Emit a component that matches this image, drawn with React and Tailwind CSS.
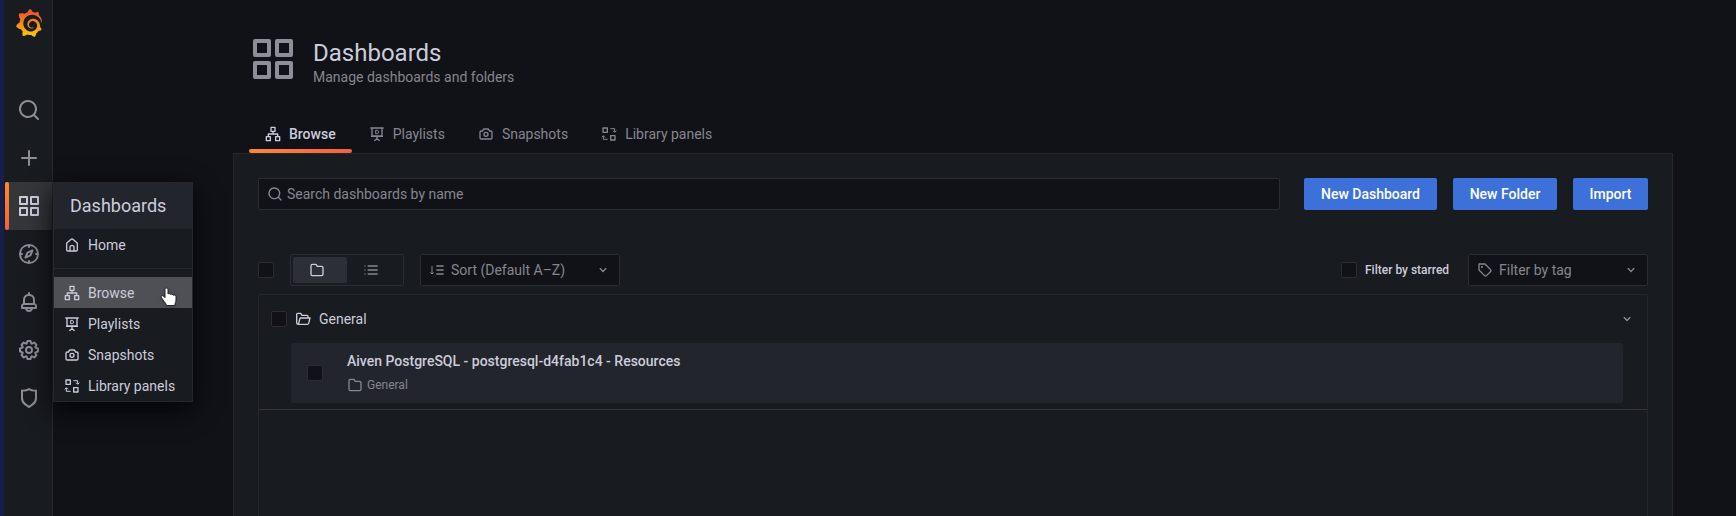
import { SiGrafana } from "react-icons/si";

const PATHS = {
  search:
    "M21.71,20.29,18,16.61A9,9,0,1,0,16.61,18l3.68,3.68a1,1,0,0,0,1.42,0A1,1,0,0,0,21.71,20.29ZM11,18a7,7,0,1,1,7-7A7,7,0,0,1,11,18Z",
  plus: "M19,11H13V5a1,1,0,0,0-2,0v6H5a1,1,0,0,0,0,2h6v6a1,1,0,0,0,2,0V13h6a1,1,0,0,0,0-2Z",
  apps: "M10,13H3a1,1,0,0,0-1,1v7a1,1,0,0,0,1,1h7a1,1,0,0,0,1-1V14A1,1,0,0,0,10,13ZM9,20H4V15H9ZM21,2H14a1,1,0,0,0-1,1v7a1,1,0,0,0,1,1h7a1,1,0,0,0,1-1V3A1,1,0,0,0,21,2ZM20,9H15V4h5Zm1,4H14a1,1,0,0,0-1,1v7a1,1,0,0,0,1,1h7a1,1,0,0,0,1-1V14A1,1,0,0,0,21,13Zm-1,7H15V15h5ZM10,2H3A1,1,0,0,0,2,3v7a1,1,0,0,0,1,1h7a1,1,0,0,0,1-1V3A1,1,0,0,0,10,2ZM9,9H4V4H9Z",
  compass:
    "M12,2A10,10,0,1,0,22,12,10,10,0,0,0,12,2Zm1,17.93V19a1,1,0,0,0-2,0v.93A8,8,0,0,1,4.07,13H5a1,1,0,0,0,0-2H4.07A8,8,0,0,1,11,4.07V5a1,1,0,0,0,2,0V4.07A8,8,0,0,1,19.93,11H19a1,1,0,0,0,0,2h.93A8,8,0,0,1,13,19.93ZM15.14,7.55l-5,2.12a1,1,0,0,0-.52.52l-2.12,5a1,1,0,0,0,.21,1.1,1,1,0,0,0,.7.29.93.93,0,0,0,.4-.09l5-2.12a1,1,0,0,0,.52-.52l2.12-5a1,1,0,0,0-1.31-1.31Zm-2.49,5.1-2.28,1,1-2.28,2.28-1Z",
  bell: "M18,13.18V10a6,6,0,0,0-5-5.91V3a1,1,0,0,0-2,0V4.09A6,6,0,0,0,6,10v3.18A3,3,0,0,0,4,16v2a1,1,0,0,0,1,1H8.14a4,4,0,0,0,7.72,0H19a1,1,0,0,0,1-1V16A3,3,0,0,0,18,13.18ZM8,10a4,4,0,0,1,8,0v3H8Zm4,10a2,2,0,0,1-1.72-1h3.44A2,2,0,0,1,12,20Zm6-3H6V16a1,1,0,0,1,1-1H17a1,1,0,0,1,1,1Z",
  cog: "M21.32,9.55l-1.89-.63.89-1.78A1,1,0,0,0,20.13,6L18,3.87a1,1,0,0,0-1.15-.19l-1.78.89-.63-1.89A1,1,0,0,0,13.5,2h-3a1,1,0,0,0-.95.68L8.92,4.57,7.14,3.68A1,1,0,0,0,6,3.87L3.87,6a1,1,0,0,0-.19,1.15l.89,1.78-1.89.63A1,1,0,0,0,2,10.5v3a1,1,0,0,0,.68.95l1.89.63-.89,1.78A1,1,0,0,0,3.87,18L6,20.13a1,1,0,0,0,1.15.19l1.78-.89.63,1.89a1,1,0,0,0,.95.68h3a1,1,0,0,0,.95-.68l.63-1.89,1.78.89A1,1,0,0,0,18,20.13L20.13,18a1,1,0,0,0,.19-1.15l-.89-1.78,1.89-.63A1,1,0,0,0,22,13.5v-3A1,1,0,0,0,21.32,9.55ZM20,12.78l-1.2.4A2,2,0,0,0,17.64,16l.57,1.14-1.1,1.1L16,17.64a2,2,0,0,0-2.79,1.16l-.4,1.2H11.22l-.4-1.2A2,2,0,0,0,8,17.64l-1.14.57-1.1-1.1L6.36,16A2,2,0,0,0,5.2,13.18L4,12.78V11.22l1.2-.4A2,2,0,0,0,6.36,8L5.79,6.89l1.1-1.1L8,6.36A2,2,0,0,0,10.82,5.2l.4-1.2h1.56l.4,1.2A2,2,0,0,0,16,6.36l1.14-.57,1.1,1.1L17.64,8a2,2,0,0,0,1.16,2.79l1.2.4ZM12,8a4,4,0,1,0,4,4A4,4,0,0,0,12,8Zm0,6a2,2,0,1,1,2-2A2,2,0,0,1,12,14Z",
  shield:
    "M19.63,3.65a1,1,0,0,0-.84-.2,8,8,0,0,1-6.22-1.27,1,1,0,0,0-1.14,0A8,8,0,0,1,5.21,3.45a1,1,0,0,0-.84.2A1,1,0,0,0,4,4.43v7.45a9,9,0,0,0,3.77,7.33l3.65,2.6a1,1,0,0,0,1.16,0l3.65-2.6A9,9,0,0,0,20,11.88V4.43A1,1,0,0,0,19.63,3.65ZM18,11.88a7,7,0,0,1-2.93,5.7L12,19.77,8.93,17.58A7,7,0,0,1,6,11.88V5.58a10,10,0,0,0,6-1.39,10,10,0,0,0,6,1.39Z",
  home: "M20,8h0L14,2.74a3,3,0,0,0-4,0L4,8a3,3,0,0,0-1,2.26V19a3,3,0,0,0,3,3H18a3,3,0,0,0,3-3V10.25A3,3,0,0,0,20,8ZM14,20H10V15a1,1,0,0,1,1-1h2a1,1,0,0,1,1,1Zm5-1a1,1,0,0,1-1,1H16V15a3,3,0,0,0-3-3H11a3,3,0,0,0-3,3v5H6a1,1,0,0,1-1-1V10.25a1,1,0,0,1,.34-.75l6-5.25a1,1,0,0,1,1.32,0l6,5.25a1,1,0,0,1,.34.75Z",
  camera:
    "M19,6.5H17.72l-.32-1a3,3,0,0,0-2.84-2H9.44A3,3,0,0,0,6.6,5.55l-.32,1H5a3,3,0,0,0-3,3v8a3,3,0,0,0,3,3H19a3,3,0,0,0,3-3v-8A3,3,0,0,0,19,6.5Zm1,11a1,1,0,0,1-1,1H5a1,1,0,0,1-1-1v-8a1,1,0,0,1,1-1H7a1,1,0,0,0,1-.68l.54-1.64a1,1,0,0,1,.95-.68h5.12a1,1,0,0,1,.95.68l.54,1.64A1,1,0,0,0,17,8.5h2a1,1,0,0,1,1,1Zm-8-9a4,4,0,1,0,4,4A4,4,0,0,0,12,8.5Zm0,6a2,2,0,1,1,2-2A2,2,0,0,1,12,14.5Z",
  folder:
    "M19,5.5H12.72l-.32-1a3,3,0,0,0-2.84-2H5a3,3,0,0,0-3,3v13a3,3,0,0,0,3,3H19a3,3,0,0,0,3-3V8.5A3,3,0,0,0,19,5.5Zm1,13a1,1,0,0,1-1,1H5a1,1,0,0,1-1-1V5.5a1,1,0,0,1,1-1H9.56a1,1,0,0,1,.95.68l.54,1.64A1,1,0,0,0,12,7.5h7a1,1,0,0,1,1,1Z",
  down: "M17,9.17a1,1,0,0,0-1.41,0L12,12.71,8.46,9.17a1,1,0,0,0-1.41,0,1,1,0,0,0,0,1.42l4.24,4.24a1,1,0,0,0,1.42,0L17,10.59A1,1,0,0,0,17,9.17Z",
  tag: "M7.5,6A1.5,1.5,0,1,0,9,7.5,1.5,1.5,0,0,0,7.5,6Zm13.62,4.71L12.71,2.29A1,1,0,0,0,12,2H3A1,1,0,0,0,2,3v9a1,1,0,0,0,.29.71l8.42,8.41a3,3,0,0,0,4.24,0L21.12,15a3,3,0,0,0,0-4.24Zm-1.41,2.82h0l-6.18,6.17a1,1,0,0,1-1.41,0L4,11.59V4h7.59l8.12,8.12a1,1,0,0,1,.29.71A1,1,0,0,1,19.71,13.53Z",
};

// Outline icons: a main stroke, and an optional lighter one for fine parts.
const LINES = {
  sitemap: ["M9 2H15V8H9ZM2 16H8V22H2ZM16 16H22V22H16ZM12 8V12M5 16V12H19V16"],
  presentation: ["M2 3H22M4.500 3V15H19.500V3M3 15.500H21M12 16V21M8 22L12 19L16 22", "M10 6.500H13L14.500 9L13 11.500H10Z"],
  library: ["M3 3H9.500V9.500H3ZM14.500 14.500H21V21H14.500Z", "M14 4H20.500V9M18 7L20.500 9.500L23 7M10 20H3.500V15M1 17L3.500 14.500L6 17"],
  list: ["M7 6H22M7 12H22M7 18H22", "M2 6H4M2 12H4M2 18H4"],
  sort: ["M11 6H22M11 12H22M11 18H22", "M4.500 6V18M2 15.500L4.500 18L7 15.500"],
  folderOpen: [
    "M5 20C3.500 20 2.500 19 2.500 17.500V5C2.500 4 3 3.500 4 3.500H8.500L10.500 6.500H18C19 6.500 19.500 7 19.500 8V10.500M5 20H18.500C19.500 20 20.200 19.500 20.500 18.500L22.500 10.500H9C8 10.500 7.500 11 7.200 12L5 20Z",
  ],
};

function Icon({ name, className = "size-4" }) {
  return (
    <svg viewBox="0 0 24 24" aria-hidden="true" className={`shrink-0 ${className}`}>
      {PATHS[name] ? (
        <path d={PATHS[name]} fill="currentColor" />
      ) : (
        <g fill="none" stroke="currentColor" strokeLinejoin="round">
          <path d={LINES[name][0]} strokeWidth="2" />
          {LINES[name][1] && <path d={LINES[name][1]} strokeWidth="1.500" />}
        </g>
      )}
    </svg>
  );
}

function Checkbox({ id, label }) {
  return (
    <input
      id={id}
      type="checkbox"
      aria-label={label}
      className="size-4 shrink-0 appearance-none rounded-xs border border-[#2c2d33] bg-[#111217]"
    />
  );
}

const NAV = [
  ["search", "Search"],
  ["plus", "Create"],
  ["apps", "Dashboards"],
  ["compass", "Explore"],
  ["bell", "Alerting"],
  ["cog", "Configuration"],
  ["shield", "Server admin"],
];

const SECTIONS = [
  ["sitemap", "Browse"],
  ["presentation", "Playlists"],
  ["camera", "Snapshots"],
  ["library", "Library panels"],
];

const ACTIONS = [
  ["New Dashboard", "w-[133px]"],
  ["New Folder", "w-[104px]"],
  ["Import", "w-[75px]"],
];

function Logo() {
  return (
    <a href="#home" aria-label="Grafana" className="flex h-[46px] items-center justify-center">
      <svg aria-hidden="true" className="absolute size-0">
        <defs>
          <linearGradient id="flame" x1="0" y1="0" x2="0" y2="1">
            <stop offset="0.150" stopColor="#f05a28" />
            <stop offset="1" stopColor="#fbca0a" />
          </linearGradient>
        </defs>
      </svg>
      <SiGrafana className="size-7" style={{ fill: "url(#flame)" }} />
    </a>
  );
}

function Pointer() {
  return (
    <svg
      viewBox="0 0 18 20"
      aria-hidden="true"
      className="pointer-events-none absolute top-2.5 right-3.5 h-5 w-[18px] drop-shadow"
    >
      <path
        d="M5 2.500C5 .6 8 .6 8 2.500V7C8.500 6.300 10.300 6.500 10.500 7.500C11.200 6.800 13 7.100 13.200 8.200C14 7.600 16 7.900 16 9.600V13C16 15 15 15.500 14.800 18.500H6.500C6.300 16.500 4.500 15.500 3.500 13.500L1.300 10.300C.6 9 2.300 8 3.500 9.200L5 10.700Z"
        fill="#fff"
        stroke="#222"
        strokeWidth="1"
      />
    </svg>
  );
}

function Flyout() {
  return (
    <div className="absolute top-0 left-12 z-20 w-[140px] border border-[#25272c] bg-[#181b1f] text-sm text-[#ccccdc] shadow-[0_8px_24px_#010409]">
      <a href="#dashboards" className="flex h-[46px] items-center bg-[#22252b] px-4 text-lg">
        Dashboards
      </a>
      <a href="#home" className="flex h-[31px] items-center gap-2 px-2.5">
        <Icon name="home" />
        Home
      </a>
      <hr className="my-2 border-[#26282d]" />
      {SECTIONS.map(([icon, label]) => (
        <a
          key={label}
          href={`#${icon}`}
          className={`relative flex h-[31px] items-center gap-2 px-2.5 whitespace-nowrap ${label === "Browse" ? "bg-[#4f5055]" : ""}`}
        >
          <Icon name={icon} />
          {label}
          {label === "Browse" && <Pointer />}
        </a>
      ))}
    </div>
  );
}

function Sidebar() {
  return (
    <nav className="w-[53px] shrink-0 border-r border-l-4 border-r-[#27292e] border-l-[#161f4c] bg-[#181b1f] pl-px">
      <Logo />
      <ul className="mt-10 text-[#8e8e99]">
        {NAV.map(([icon, label]) => (
          <li key={label} className="relative">
            <a
              href={`#${icon}`}
              aria-label={label}
              className={`flex h-12 items-center justify-center ${label === "Dashboards" ? "bg-[#35363a] text-[#ccccdc]" : ""}`}
            >
              <Icon name={icon} className="size-6" />
            </a>
            {label === "Dashboards" && (
              <>
                <span className="absolute inset-y-0 left-0 w-1 rounded-xs bg-linear-to-b from-[#ff8833] to-[#f55f3e]" />
                <Flyout />
              </>
            )}
          </li>
        ))}
      </ul>
    </nav>
  );
}

function PageHeader() {
  return (
    <header className="px-4 pt-[35px]">
      <div className="flex gap-4">
        <Icon name="apps" className="size-12 text-[#8e8e99]" />
        <div>
          <h1 className="mt-1 text-2xl leading-7">Dashboards</h1>
          <p className="text-sm leading-5 text-[#85868f]">Manage dashboards and folders</p>
        </div>
      </div>
      <div className="mt-7 flex gap-px">
        {SECTIONS.map(([icon, label]) => (
          <a
            key={label}
            href={`#${icon}`}
            className={`relative flex h-[38px] items-center gap-2 px-4 text-sm ${label === "Browse" ? "font-medium" : "text-[#85868f]"}`}
          >
            <Icon name={icon} />
            {label}
            {label === "Browse" && (
              <span className="absolute inset-x-0 bottom-0 h-1 rounded-xs bg-linear-to-r from-[#ff8833] to-[#f55f3e]" />
            )}
          </a>
        ))}
      </div>
    </header>
  );
}

function Dropdown({ icon, text, label, className }) {
  return (
    <label
      className={`flex h-8 items-center rounded-xs border border-[#2c2d33] bg-[#111217] px-2 text-[#85868f] ${className}`}
    >
      <Icon name={icon} />
      <select aria-label={label} className="ml-1.5 min-w-0 flex-1 appearance-none bg-transparent text-sm outline-none">
        <option>{text}</option>
      </select>
      <Icon name="down" />
    </label>
  );
}

function Toolbar() {
  return (
    <>
      <div className="flex gap-4">
        <label className="mr-2 flex h-8 flex-1 items-center rounded-xs border border-[#2c2d33] bg-[#111217] px-2 text-[#85868f]">
          <Icon name="search" />
          <input
            type="text"
            aria-label="Search dashboards by name"
            placeholder="Search dashboards by name"
            className="ml-1 flex-1 bg-transparent text-sm outline-none placeholder:text-[#85868f]"
          />
        </label>
        {ACTIONS.map(([text, width]) => (
          <button key={text} type="button" className={`h-8 rounded-xs bg-[#3d71d9] text-sm font-medium text-white ${width}`}>
            {text}
          </button>
        ))}
      </div>
      <div className="mt-11 flex items-center gap-4">
        <Checkbox label="Select all" />
        <div className="flex h-8 rounded-xs border border-[#2c2d33] p-0.5 text-[#85868f]">
          <button
            type="button"
            aria-label="View by folders"
            className="flex w-[54px] items-center rounded-xs bg-[#2c2f35] pl-4 text-[#ccccdc]"
          >
            <Icon name="folder" />
          </button>
          <button type="button" aria-label="View as list" className="flex w-[54px] items-center pl-4">
            <Icon name="list" />
          </button>
        </div>
        <Dropdown icon="sort" text="Sort (Default A–Z)" label="Sort" className="w-[200px]" />
        <div className="ml-auto flex items-center gap-2">
          <Checkbox id="starred" label="Filter by starred" />
          <label htmlFor="starred" className="w-[87px] text-xs font-medium whitespace-nowrap">
            Filter by starred
          </label>
        </div>
        <Dropdown icon="tag" text="Filter by tag" label="Filter by tag" className="w-[180px]" />
      </div>
    </>
  );
}

function Results() {
  return (
    <section className="mt-2 flex-1 rounded-t-xs border border-b-0 border-[#25272c]">
      <div className="border-b border-[#33353b] pb-1.5">
        <div className="flex h-12 items-center px-3">
          <Checkbox label="Select folder General" />
          <Icon name="folderOpen" className="ml-2 size-4" />
          <h2 className="ml-2 text-sm">General</h2>
          <button type="button" aria-label="Collapse folder" className="ml-auto text-[#8e8e99]">
            <Icon name="down" />
          </button>
        </div>
        <div className="mr-6 ml-8 flex h-[60px] items-center rounded-xs bg-[#22252b] pl-4">
          <Checkbox label="Select dashboard" />
          <div className="ml-6">
            <a href="#dashboard" className="block text-sm leading-5 font-medium">
              Aiven PostgreSQL - postgresql-d4fab1c4 - Resources
            </a>
            <p className="mt-1 flex items-center gap-1 text-xs leading-5 text-[#85868f]">
              <Icon name="folder" />
              General
            </p>
          </div>
        </div>
      </div>
    </section>
  );
}

export default function App() {
  return (
    <div className="flex min-h-screen bg-[#111217] font-[Roboto,sans-serif] text-[#ccccdc]">
      <Sidebar />
      <main className="ml-[180px] flex max-w-[1440px] flex-1 flex-col">
        <PageHeader />
        <div className="flex flex-1 flex-col border border-b-0 border-[#25272c] bg-[#181b1f] px-6 pt-6">
          <Toolbar />
          <Results />
        </div>
      </main>
    </div>
  );
}
